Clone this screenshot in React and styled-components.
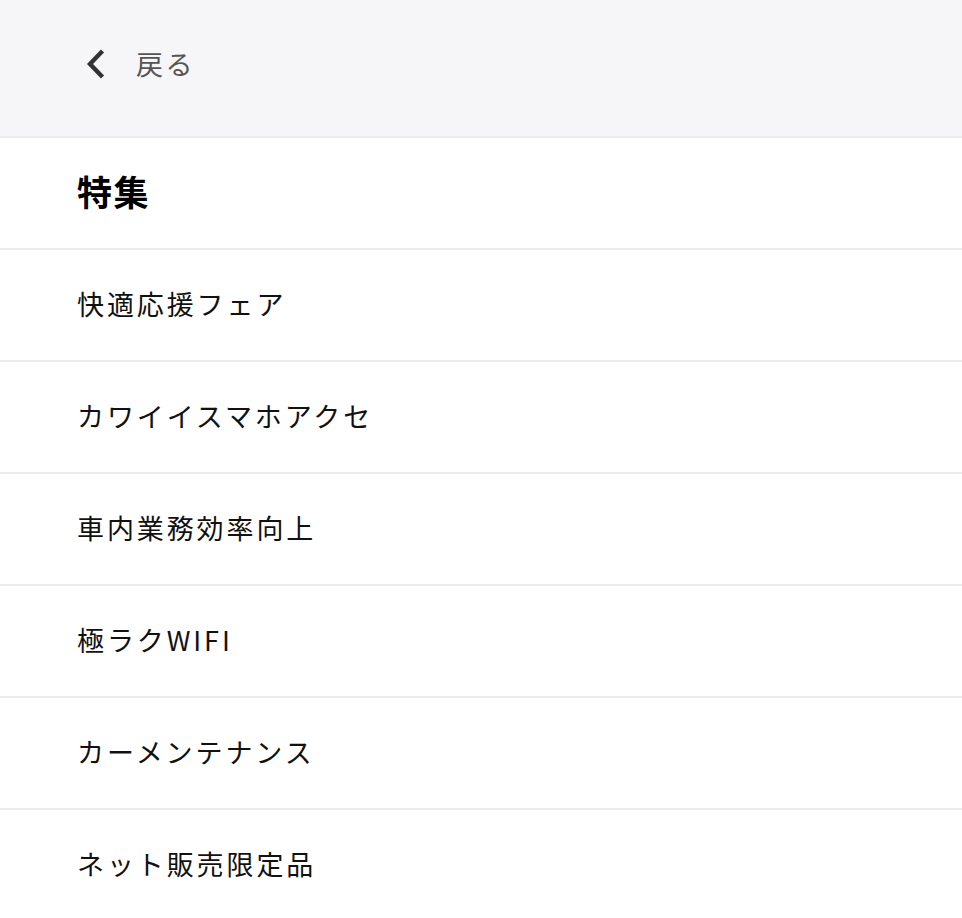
import React from "react";
import styled, { createGlobalStyle } from "styled-components";

const GlobalStyle = createGlobalStyle`
  html, body {
    margin: 0;
    padding: 0;
    background: #fff;
  }
  body {
    font-family: "Noto Sans CJK JP", "Noto Sans", sans-serif;
    color: #111;
  }
`;

const items = [
  "快適応援フェア",
  "カワイイスマホアクセ",
  "車内業務効率向上",
  "極ラクWIFI",
  "カーメンテナンス",
  "ネット販売限定品",
];

const App = () => {
  return (
    <Page>
      <GlobalStyle />
      <Header>
        <BackButton>
          <svg width="24" height="30" viewBox="0 0 24 30">
            <path
              d="M18 3.5 L7 15 L18 26.5"
              fill="none"
              stroke="#333"
              strokeWidth="4.4"
              strokeLinecap="square"
              strokeLinejoin="miter"
            />
          </svg>
          <BackLabel>戻る</BackLabel>
        </BackButton>
      </Header>
      <TitleRow>
        <Title>特集</Title>
      </TitleRow>
      <List>
        {items.map((el, i) => (
          <Row key={i}>{el}</Row>
        ))}
      </List>
    </Page>
  );
};

const Page = styled.div`
  width: 100%;
  min-height: 100vh;
  background: #fff;
`;

const Header = styled.div`
  height: 136px;
  background-color: #f6f5f8;
  border-bottom: 2px solid #ececee;
  display: flex;
  align-items: center;
  padding-left: 83px;
`;

const BackButton = styled.div`
  display: flex;
  align-items: center;
  gap: 29px;
  cursor: pointer;
  margin-top: -8px;
`;

const BackLabel = styled.span`
  font-size: 27px;
  letter-spacing: 2.5px;
  color: #555;
  margin-top: -2px;
`;

const TitleRow = styled.div`
  height: 112px;
  box-sizing: border-box;
  padding: 0 0 6px 77px;
  display: flex;
  align-items: center;
  border-bottom: 2px solid #ebebeb;
`;

const Title = styled.h1`
  margin: 0;
  font-size: 35px;
  font-weight: 700;
  letter-spacing: 1.5px;
  color: #000;
`;

const List = styled.div`
  display: flex;
  flex-direction: column;
`;

const Row = styled.div`
  height: 112px;
  box-sizing: border-box;
  display: flex;
  align-items: center;
  padding: 0 0 4px 77px;
  font-size: 27px;
  letter-spacing: 2.9px;
  color: #111;
  border-bottom: 2px solid #ebebeb;
  cursor: pointer;
`;

export default App;
